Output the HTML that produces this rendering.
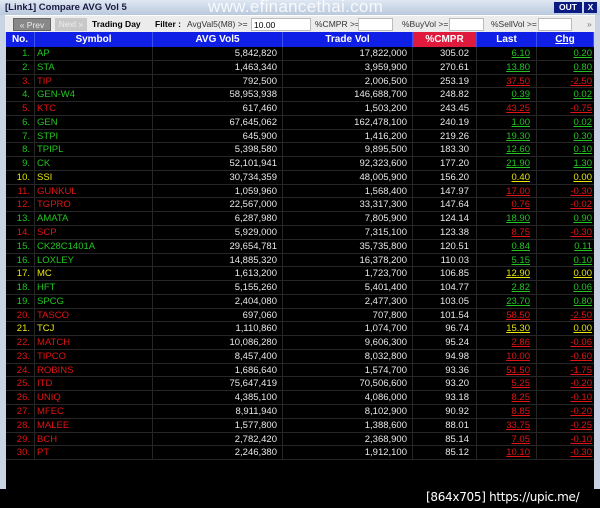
<!DOCTYPE html>
<html><head><style>
*{margin:0;padding:0;box-sizing:border-box}
body{width:600px;height:508px;background:#000;position:relative;overflow:hidden;font-family:"Liberation Sans",sans-serif;font-size:9.5px}
.frame{position:absolute;left:0;top:0;width:600px;height:489px;background:#c8d4e4;}
.title{position:absolute;left:0;top:0;width:600px;height:15px;background:linear-gradient(#dfe8f3,#b9c9dd);font-weight:bold;font-size:9.5px;color:#1a1a40;padding:2px 5px}
.wm{position:absolute;left:208px;top:-3px;color:#fff;font-size:17px;opacity:.85;letter-spacing:.3px;white-space:nowrap}
.out{position:absolute;left:554px;top:2px;width:28px;height:11px;background:#0a1a80;color:#fff;font-weight:bold;font-size:8.5px;text-align:center;line-height:11px}
.x{position:absolute;left:584px;top:2px;width:13px;height:11px;background:#0a1a80;color:#fff;font-weight:bold;font-size:8.5px;text-align:center;line-height:11px}
.tb{position:absolute;left:5px;top:15px;width:590px;height:17px;background:#ececec;border-top:1px solid #fff}
.tb div{position:absolute;top:2px;height:13px;font-size:8.5px;line-height:13px;white-space:nowrap}
.in{background:#fff;border:1px solid #bbb}
.area{position:absolute;left:6px;top:32px;width:588px;height:457px;background:#000}
.hd{position:absolute;top:32px;height:15px;background:#0f1fe6;color:#fff;font-weight:bold;font-size:10px;text-align:center;line-height:15px;border-right:1px solid #4050f0}
.r{position:absolute;left:6px;width:588px;height:13.77px;border-bottom:1px solid #262626;line-height:13px;white-space:nowrap}
.r span{position:absolute;top:0;height:13.77px;border-right:1px solid #262626}
.n{left:0;width:29px;text-align:right;padding-right:4px}
.s{left:29px;width:118px;padding-left:2px}
.a{left:147px;width:130px;text-align:right;padding-right:5px;color:#e8e8e8}
.t{left:277px;width:130px;text-align:right;padding-right:5px;color:#e8e8e8}
.c{left:407px;width:64px;text-align:right;padding-right:7px;color:#e8e8e8}
.l{left:471px;width:60px;text-align:right;padding-right:6px;text-decoration:underline}
.g{left:531px;width:57px;text-align:right;padding-right:2px;text-decoration:underline;border-right:none!important}
.G{color:#22c322}.R{color:#e01414}.Y{color:#e6e60a}
.ft{position:absolute;left:426px;top:490px;color:#fff;font-size:12px;font-family:"DejaVu Sans",sans-serif;white-space:nowrap;letter-spacing:-0.3px}
</style></head><body>
<div class="frame"></div>
<div class="title">[Link1] Compare AVG Vol 5</div>
<div class="wm">www.efinancethai.com</div>
<div class="out">OUT</div><div class="x">X</div>
<div class="tb">
<div style="left:8px;width:38px;background:#888;color:#eee;text-align:center;border:1px solid #666">« Prev</div>
<div style="left:50px;width:32px;background:#c8c8c8;color:#eee;text-align:center">Next »</div>
<div style="left:87px;font-weight:bold">Trading Day</div>
<div style="left:150px;font-weight:bold">Filter :</div>
<div style="left:182px;color:#333">AvgVal5(M8) &gt;=</div>
<div class="in" style="left:246px;width:60px;padding-left:2px">10.00</div>
<div style="left:310px;color:#333">%CMPR &gt;=</div>
<div class="in" style="left:353px;width:35px"></div>
<div style="left:397px;color:#333">%BuyVol &gt;=</div>
<div class="in" style="left:444px;width:35px"></div>
<div style="left:486px;color:#333">%SellVol &gt;=</div>
<div class="in" style="left:533px;width:34px"></div>
<div style="left:582px;color:#777">»</div>
</div>
<div class="area"></div>
<div class="hd" style="left:6px;width:29px">No.</div>
<div class="hd" style="left:35px;width:118px">Symbol</div>
<div class="hd" style="left:153px;width:130px">AVG Vol5</div>
<div class="hd" style="left:283px;width:130px">Trade Vol</div>
<div class="hd" style="left:413px;width:64px;background:#e01a3c">%CMPR</div>
<div class="hd" style="left:477px;width:60px">Last</div>
<div class="hd" style="left:537px;width:57px;text-decoration:underline">Chg</div>

<div class="r" style="top:47px"><span class="n G">1.</span><span class="s G">AP</span><span class="a">5,842,820</span><span class="t">17,822,000</span><span class="c">305.02</span><span class="l G">6.10</span><span class="g G">0.20</span></div>
<div class="r" style="top:60.77px"><span class="n G">2.</span><span class="s G">STA</span><span class="a">1,463,340</span><span class="t">3,959,900</span><span class="c">270.61</span><span class="l G">13.80</span><span class="g G">0.80</span></div>
<div class="r" style="top:74.54px"><span class="n R">3.</span><span class="s R">TIP</span><span class="a">792,500</span><span class="t">2,006,500</span><span class="c">253.19</span><span class="l R">37.50</span><span class="g R">-2.50</span></div>
<div class="r" style="top:88.31px"><span class="n G">4.</span><span class="s G">GEN-W4</span><span class="a">58,953,938</span><span class="t">146,688,700</span><span class="c">248.82</span><span class="l G">0.39</span><span class="g G">0.02</span></div>
<div class="r" style="top:102.08px"><span class="n R">5.</span><span class="s R">KTC</span><span class="a">617,460</span><span class="t">1,503,200</span><span class="c">243.45</span><span class="l R">43.25</span><span class="g R">-0.75</span></div>
<div class="r" style="top:115.85px"><span class="n G">6.</span><span class="s G">GEN</span><span class="a">67,645,062</span><span class="t">162,478,100</span><span class="c">240.19</span><span class="l G">1.00</span><span class="g G">0.02</span></div>
<div class="r" style="top:129.62px"><span class="n G">7.</span><span class="s G">STPI</span><span class="a">645,900</span><span class="t">1,416,200</span><span class="c">219.26</span><span class="l G">19.30</span><span class="g G">0.30</span></div>
<div class="r" style="top:143.39px"><span class="n G">8.</span><span class="s G">TPIPL</span><span class="a">5,398,580</span><span class="t">9,895,500</span><span class="c">183.30</span><span class="l G">12.60</span><span class="g G">0.10</span></div>
<div class="r" style="top:157.16px"><span class="n G">9.</span><span class="s G">CK</span><span class="a">52,101,941</span><span class="t">92,323,600</span><span class="c">177.20</span><span class="l G">21.90</span><span class="g G">1.30</span></div>
<div class="r" style="top:170.93px"><span class="n Y">10.</span><span class="s Y">SSI</span><span class="a">30,734,359</span><span class="t">48,005,900</span><span class="c">156.20</span><span class="l Y">0.40</span><span class="g Y">0.00</span></div>
<div class="r" style="top:184.7px"><span class="n R">11.</span><span class="s R">GUNKUL</span><span class="a">1,059,960</span><span class="t">1,568,400</span><span class="c">147.97</span><span class="l R">17.00</span><span class="g R">-0.30</span></div>
<div class="r" style="top:198.47px"><span class="n R">12.</span><span class="s R">TGPRO</span><span class="a">22,567,000</span><span class="t">33,317,300</span><span class="c">147.64</span><span class="l R">0.76</span><span class="g R">-0.02</span></div>
<div class="r" style="top:212.24px"><span class="n G">13.</span><span class="s G">AMATA</span><span class="a">6,287,980</span><span class="t">7,805,900</span><span class="c">124.14</span><span class="l G">18.90</span><span class="g G">0.90</span></div>
<div class="r" style="top:226.01px"><span class="n R">14.</span><span class="s R">SCP</span><span class="a">5,929,000</span><span class="t">7,315,100</span><span class="c">123.38</span><span class="l R">8.75</span><span class="g R">-0.30</span></div>
<div class="r" style="top:239.78px"><span class="n G">15.</span><span class="s G">CK28C1401A</span><span class="a">29,654,781</span><span class="t">35,735,800</span><span class="c">120.51</span><span class="l G">0.84</span><span class="g G">0.11</span></div>
<div class="r" style="top:253.55px"><span class="n G">16.</span><span class="s G">LOXLEY</span><span class="a">14,885,320</span><span class="t">16,378,200</span><span class="c">110.03</span><span class="l G">5.15</span><span class="g G">0.10</span></div>
<div class="r" style="top:267.32px"><span class="n Y">17.</span><span class="s Y">MC</span><span class="a">1,613,200</span><span class="t">1,723,700</span><span class="c">106.85</span><span class="l Y">12.90</span><span class="g Y">0.00</span></div>
<div class="r" style="top:281.09px"><span class="n G">18.</span><span class="s G">HFT</span><span class="a">5,155,260</span><span class="t">5,401,400</span><span class="c">104.77</span><span class="l G">2.82</span><span class="g G">0.06</span></div>
<div class="r" style="top:294.86px"><span class="n G">19.</span><span class="s G">SPCG</span><span class="a">2,404,080</span><span class="t">2,477,300</span><span class="c">103.05</span><span class="l G">23.70</span><span class="g G">0.80</span></div>
<div class="r" style="top:308.63px"><span class="n R">20.</span><span class="s R">TASCO</span><span class="a">697,060</span><span class="t">707,800</span><span class="c">101.54</span><span class="l R">58.50</span><span class="g R">-2.50</span></div>
<div class="r" style="top:322.4px"><span class="n Y">21.</span><span class="s Y">TCJ</span><span class="a">1,110,860</span><span class="t">1,074,700</span><span class="c">96.74</span><span class="l Y">15.30</span><span class="g Y">0.00</span></div>
<div class="r" style="top:336.17px"><span class="n R">22.</span><span class="s R">MATCH</span><span class="a">10,086,280</span><span class="t">9,606,300</span><span class="c">95.24</span><span class="l R">2.86</span><span class="g R">-0.06</span></div>
<div class="r" style="top:349.94px"><span class="n R">23.</span><span class="s R">TIPCO</span><span class="a">8,457,400</span><span class="t">8,032,800</span><span class="c">94.98</span><span class="l R">10.00</span><span class="g R">-0.60</span></div>
<div class="r" style="top:363.71px"><span class="n R">24.</span><span class="s R">ROBINS</span><span class="a">1,686,640</span><span class="t">1,574,700</span><span class="c">93.36</span><span class="l R">51.50</span><span class="g R">-1.75</span></div>
<div class="r" style="top:377.48px"><span class="n R">25.</span><span class="s R">ITD</span><span class="a">75,647,419</span><span class="t">70,506,600</span><span class="c">93.20</span><span class="l R">5.25</span><span class="g R">-0.20</span></div>
<div class="r" style="top:391.25px"><span class="n R">26.</span><span class="s R">UNIQ</span><span class="a">4,385,100</span><span class="t">4,086,000</span><span class="c">93.18</span><span class="l R">8.25</span><span class="g R">-0.10</span></div>
<div class="r" style="top:405.02px"><span class="n R">27.</span><span class="s R">MFEC</span><span class="a">8,911,940</span><span class="t">8,102,900</span><span class="c">90.92</span><span class="l R">8.85</span><span class="g R">-0.20</span></div>
<div class="r" style="top:418.79px"><span class="n R">28.</span><span class="s R">MALEE</span><span class="a">1,577,800</span><span class="t">1,388,600</span><span class="c">88.01</span><span class="l R">33.75</span><span class="g R">-0.25</span></div>
<div class="r" style="top:432.56px"><span class="n R">29.</span><span class="s R">BCH</span><span class="a">2,782,420</span><span class="t">2,368,900</span><span class="c">85.14</span><span class="l R">7.05</span><span class="g R">-0.10</span></div>
<div class="r" style="top:446.33px"><span class="n R">30.</span><span class="s R">PT</span><span class="a">2,246,380</span><span class="t">1,912,100</span><span class="c">85.12</span><span class="l R">10.10</span><span class="g R">-0.30</span></div>
<div class="ft">[864x705] https://upic.me/</div>
</body></html>
